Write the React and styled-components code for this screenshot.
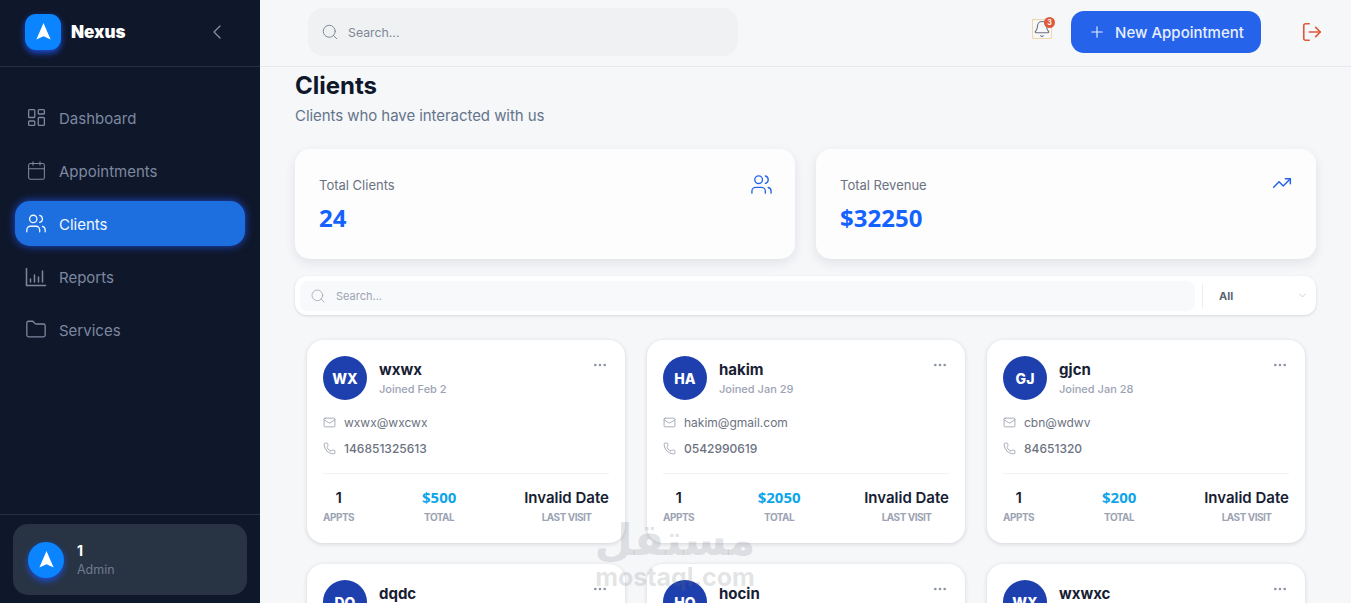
import React from "react";
import styled, { createGlobalStyle } from "styled-components";
import {
  Bell,
  Calendar,
  ChevronDown,
  ChevronLeft,
  Ellipsis,
  Folder,
  LayoutDashboard,
  LogOut,
  Mail,
  Phone,
  Plus,
  Search,
  TrendingUp,
  Users,
} from "lucide-react";

const GlobalStyle = createGlobalStyle`
  html, body {
    margin: 0;
    padding: 0;
    height: 100%;
    overflow: hidden;
    background: #f6f7f9;
    font-family: Inter, "Noto Sans", sans-serif;
  }
  * { box-sizing: border-box; }
`;

const Shell = styled.div`
  display: flex;
  width: 1351px;
  height: 603px;
  overflow: hidden;
  position: relative;
`;

const Sidebar = styled.aside`
  width: 260px;
  flex: none;
  display: flex;
  flex-direction: column;
  background: #0f172a;
`;

const Brand = styled.div`
  height: 67px;
  flex: none;
  display: flex;
  align-items: center;
  padding: 0 31px 3px 25px;
  border-bottom: 1px solid #263040;
`;

const LogoBox = styled.div`
  width: 36px;
  height: 36px;
  display: flex;
  align-items: center;
  justify-content: center;
  flex: none;
  background: #0a84ff;
  border-radius: ${(props) => (props.round ? "50%" : "11px")};
  box-shadow: 0 3px 6px #1d4ed8;
`;

const BrandName = styled.span`
  margin-left: 10px;
  flex: 1;
  color: #fff;
  font-size: 17px;
  font-weight: 900;
`;

const Collapse = styled.span`
  display: flex;
  color: #8b95a7;
`;

const Nav = styled.nav`
  flex: 1;
  display: flex;
  flex-direction: column;
  gap: 8px;
  padding: 28px 15px 0;
`;

const NavItem = styled.div`
  height: 45px;
  display: flex;
  align-items: center;
  gap: 12px;
  padding: 0 10px;
  border-radius: 15px;
  font-size: 15px;
  color: ${(props) => (props.active ? "#f3f7ff" : "#7d88a0")};
  background: ${(props) => (props.active ? "#1d6fe0" : "transparent")};
  box-shadow: ${(props) => (props.active ? "0 0 8px #1d4ed8" : "none")};
`;

const NavIcon = styled.span`
  width: 22px;
  flex: none;
  display: flex;
  align-items: center;
  justify-content: center;
`;

const NavLabel = styled.span`
  padding-top: 2px;
`;

const SideFoot = styled.div`
  flex: none;
  height: 89px;
  padding: 9px 13px 0;
  border-top: 1px solid #263040;
`;

const UserCard = styled.div`
  height: 71px;
  display: flex;
  align-items: center;
  gap: 13px;
  padding: 0 15px;
  background: #283444;
  border-radius: 15px;
`;

const UserName = styled.div`
  color: #fff;
  font-size: 14px;
  font-weight: 700;
  line-height: 19px;
`;

const UserRole = styled.div`
  color: #6f7b90;
  font-size: 12.5px;
  line-height: 19px;
`;

const Main = styled.div`
  flex: 1;
  min-width: 0;
  display: flex;
  flex-direction: column;
`;

const Topbar = styled.header`
  height: 67px;
  flex: none;
  display: flex;
  align-items: center;
  padding: 0 28px 3px 48px;
  border-bottom: 1px solid #e7e9ee;
`;

const TopSearch = styled.div`
  width: 430px;
  height: 48px;
  display: flex;
  align-items: center;
  gap: 9px;
  padding: 0 13px;
  border-radius: 15px;
  background: #f0f1f3;
  color: #7f8796;
  font-size: 12.3px;
`;

const SearchLabel = styled.span`
  padding-top: 1px;
`;

const BellWrap = styled.div`
  position: relative;
  margin-left: auto;
  margin-bottom: 6px;
  width: 20px;
  height: 20px;
  display: flex;
  align-items: center;
  justify-content: center;
  color: #6b7280;
  border: 1px solid #f6d3a8;
`;

const BellBadge = styled.span`
  position: absolute;
  top: -3px;
  right: -4px;
  width: 11px;
  height: 11px;
  border-radius: 50%;
  background: #e0593a;
  color: #fff;
  font-size: 7px;
  font-weight: 700;
  line-height: 11px;
  text-align: center;
`;

const NewButton = styled.button`
  margin-left: 19px;
  width: 190px;
  height: 42px;
  display: flex;
  align-items: center;
  justify-content: center;
  gap: 9px;
  border: 0;
  border-radius: 13px;
  background: #2563eb;
  color: #e8efff;
  font-family: inherit;
  font-size: 15px;
  font-weight: 500;
`;

const ButtonLabel = styled.span`
  padding-top: 2px;
`;

const Exit = styled.span`
  display: flex;
  margin-left: 40px;
  color: #e0593a;
`;

const Content = styled.main`
  flex: 1;
  min-height: 0;
  overflow: hidden;
  padding: 0 35px;
`;

const Title = styled.h1`
  margin: 3px 0 0;
  font-size: 24px;
  line-height: 32px;
  font-weight: 700;
  color: #0f172a;
`;

const Subtitle = styled.p`
  margin: 4px 0 0;
  font-size: 15px;
  line-height: 20px;
  letter-spacing: -0.06px;
  color: #64748b;
`;

const Stats = styled.div`
  display: grid;
  grid-template-columns: 500px 500px;
  gap: 21px;
  margin-top: 23px;
`;

const StatCard = styled.div`
  height: 110px;
  padding: 24px;
  display: flex;
  justify-content: space-between;
  align-items: flex-start;
  background: #fdfdfe;
  border-radius: 15px;
  box-shadow: 0 4px 12px rgba(15, 23, 42, 0.09);
`;

const StatLabel = styled.div`
  font-size: 13px;
  line-height: 24px;
  color: #6b7280;
`;

const StatValue = styled.div`
  margin-top: 5px;
  font-family: "Noto Sans", Inter, sans-serif;
  font-size: 24px;
  line-height: 32px;
  font-weight: 700;
  color: #1463ff;
`;

const StatIcon = styled.span`
  display: flex;
  color: #2563eb;
  margin-right: ${(props) => props.nudge || 0}px;
`;

const FilterBar = styled.div`
  height: 39px;
  width: 1021px;
  margin-top: 17px;
  display: flex;
  align-items: center;
  padding: 0 8px 0 5px;
  background: #fff;
  border-radius: 12px;
  box-shadow: 0 1px 3px rgba(15, 23, 42, 0.14);
`;

const FilterSearch = styled.div`
  flex: 1;
  height: 30px;
  display: flex;
  align-items: center;
  gap: 10px;
  padding: 0 10px;
  border-radius: 8px;
  background: #f8f9fb;
  color: #9ca3b4;
  font-size: 11px;
`;

const FilterSelect = styled.div`
  width: 106px;
  height: 24px;
  margin-left: 7px;
  padding-left: 16px;
  display: flex;
  align-items: center;
  justify-content: space-between;
  border-left: 1px solid #eceef1;
  color: #5b6474;
  font-size: 11px;
  font-weight: 700;
`;

const Grid = styled.div`
  display: grid;
  grid-template-columns: repeat(3, 318px);
  gap: 21px 22px;
  width: 1021px;
  margin-top: 25px;
  padding: 0 11px 0 12px;
`;

const ClientCard = styled.article`
  height: 203px;
  padding: 16px;
  background: #fff;
  border-radius: 16px;
  box-shadow: 0 1px 4px rgba(15, 23, 42, 0.16);
`;

const CardHead = styled.div`
  display: flex;
  align-items: flex-start;
  gap: 12px;
`;

const Avatar = styled.div`
  width: 44px;
  height: 44px;
  flex: none;
  display: flex;
  align-items: center;
  justify-content: center;
  border-radius: 50%;
  background: #1e40af;
  color: #fff;
  font-size: 14px;
  font-weight: 800;
`;

const ClientInfo = styled.div`
  flex: 1;
  padding-top: 4px;
`;

const ClientName = styled.div`
  font-size: 15px;
  line-height: 20px;
  font-weight: 700;
  color: #172033;
`;

const Joined = styled.div`
  font-size: 11px;
  line-height: 18px;
  font-weight: 500;
  color: #9ca3b4;
`;

const More = styled.span`
  display: flex;
  color: #8d95a5;
  margin: 1px 1px 0 0;
`;

const ContactList = styled.div`
  margin-top: 13px;
  display: flex;
  flex-direction: column;
  gap: 8px;
`;

const ContactRow = styled.div`
  height: 18px;
  display: flex;
  align-items: center;
  gap: 8px;
  font-size: 12px;
  color: #6b7280;
  font-weight: ${(props) => (props.strong ? 500 : 400)};
  svg {
    color: #8d95a5;
  }
`;

const CardStats = styled.div`
  margin-top: 16px;
  padding-top: 13px;
  display: flex;
  justify-content: space-between;
  border-top: 1px solid #f2f3f5;
`;

const CardStat = styled.div`
  display: flex;
  flex-direction: column;
  align-items: center;
`;

const CardStatValue = styled.div`
  font-family: ${(props) => (props.accent ? '"Noto Sans", Inter' : 'Inter, "Noto Sans"')}, sans-serif;
  font-size: 15px;
  line-height: 21px;
  font-weight: ${(props) => (props.accent ? 700 : 600)};
  color: ${(props) => (props.accent ? "#0ea5e9" : "#172033")};
`;

const CardStatLabel = styled.div`
  margin-top: 1px;
  font-size: 10px;
  line-height: 16px;
  font-weight: 700;
  letter-spacing: -0.5px;
  color: #9ca3b4;
`;

const Watermark = styled.div`
  position: absolute;
  left: 575px;
  top: 512px;
  width: 200px;
  text-align: center;
  color: rgba(110, 115, 125, 0.2);
  font-weight: 700;
  pointer-events: none;
`;

const WatermarkArabic = styled.div`
  font-family: "Noto Sans", "DejaVu Sans", sans-serif;
  font-size: 44px;
  line-height: 52px;
`;

const WatermarkLatin = styled.div`
  font-size: 25px;
  line-height: 26px;
`;

const LogoMark = ({ size = 23 }) => (
  <svg width={size} height={size} viewBox="0 0 20 20" fill="#fff">
    <path d="M10 2.5 16.2 17 10 14.2 3.8 17z" />
  </svg>
);

const ReportsIcon = () => (
  <svg width="22" height="22" viewBox="0 0 22 22" fill="none" stroke="currentColor" strokeWidth="1.5" strokeLinecap="round">
    <path d="M1.5 2.5v17h19" />
    <path d="M5.5 16v-3M9.5 16V9M13.5 16v-5M17.5 16V5" />
  </svg>
);

const navItems = [
  { label: "Dashboard", icon: <LayoutDashboard size={21} strokeWidth={1.5} /> },
  { label: "Appointments", icon: <Calendar size={21} strokeWidth={1.2} /> },
  { label: "Clients", icon: <Users size={25} strokeWidth={1.4} />, active: true },
  { label: "Reports", icon: <ReportsIcon /> },
  { label: "Services", icon: <Folder size={25} strokeWidth={1.4} /> },
];

const clients = [
  { initials: "WX", name: "wxwx", joined: "Joined Feb 2", email: "wxwx@wxcwx", phone: "146851325613", total: "$500" },
  { initials: "HA", name: "hakim", joined: "Joined Jan 29", email: "hakim@gmail.com", phone: "0542990619", total: "$2050" },
  { initials: "GJ", name: "gjcn", joined: "Joined Jan 28", email: "cbn@wdwv", phone: "84651320", total: "$200" },
  { initials: "DQ", name: "dqdc", joined: "Joined Jan 27", email: "dqdc@gmail.com", phone: "0551234567", total: "$300" },
  { initials: "HO", name: "hocin", joined: "Joined Jan 25", email: "hocin@gmail.com", phone: "0661234567", total: "$800" },
  { initials: "WX", name: "wxwxc", joined: "Joined Jan 24", email: "wxwxc@wx", phone: "13245678", total: "$150" },
];

const App = () => (
  <Shell>
    <GlobalStyle />
    <Sidebar>
      <Brand>
        <LogoBox>
          <LogoMark />
        </LogoBox>
        <BrandName>Nexus</BrandName>
        <Collapse>
          <ChevronLeft size={24} strokeWidth={1.2} />
        </Collapse>
      </Brand>
      <Nav>
        {navItems.map((item) => (
          <NavItem key={item.label} active={item.active}>
            <NavIcon>{item.icon}</NavIcon>
            <NavLabel>{item.label}</NavLabel>
          </NavItem>
        ))}
      </Nav>
      <SideFoot>
        <UserCard>
          <LogoBox round>
            <LogoMark />
          </LogoBox>
          <div>
            <UserName>1</UserName>
            <UserRole>Admin</UserRole>
          </div>
        </UserCard>
      </SideFoot>
    </Sidebar>
    <Main>
      <Topbar>
        <TopSearch>
          <Search size={18} strokeWidth={1.3} />
          <SearchLabel>Search...</SearchLabel>
        </TopSearch>
        <BellWrap>
          <Bell size={20} strokeWidth={1.5} />
          <BellBadge>3</BellBadge>
        </BellWrap>
        <NewButton>
          <Plus size={18} strokeWidth={1.5} />
          <ButtonLabel>New Appointment</ButtonLabel>
        </NewButton>
        <Exit>
          <LogOut size={22} strokeWidth={1.8} />
        </Exit>
      </Topbar>
      <Content>
        <Title>Clients</Title>
        <Subtitle>Clients who have interacted with us</Subtitle>
        <Stats>
          <StatCard>
            <div>
              <StatLabel>Total Clients</StatLabel>
              <StatValue>24</StatValue>
            </div>
            <StatIcon nudge={-2}>
              <Users size={23} strokeWidth={1.4} />
            </StatIcon>
          </StatCard>
          <StatCard>
            <div>
              <StatLabel>Total Revenue</StatLabel>
              <StatValue>$32250</StatValue>
            </div>
            <StatIcon>
              <TrendingUp size={20} strokeWidth={1.8} />
            </StatIcon>
          </StatCard>
        </Stats>
        <FilterBar>
          <FilterSearch>
            <Search size={16} strokeWidth={1.2} />
            Search...
          </FilterSearch>
          <FilterSelect>
            All
            <ChevronDown size={11} strokeWidth={1.3} color="#a8afbc" />
          </FilterSelect>
        </FilterBar>
        <Grid>
          {clients.map((client) => (
            <ClientCard key={client.name}>
              <CardHead>
                <Avatar>{client.initials}</Avatar>
                <ClientInfo>
                  <ClientName>{client.name}</ClientName>
                  <Joined>{client.joined}</Joined>
                </ClientInfo>
                <More>
                  <Ellipsis size={16} strokeWidth={2} />
                </More>
              </CardHead>
              <ContactList>
                <ContactRow>
                  <Mail size={13} strokeWidth={1.4} />
                  {client.email}
                </ContactRow>
                <ContactRow strong>
                  <Phone size={13} strokeWidth={1.4} />
                  {client.phone}
                </ContactRow>
              </ContactList>
              <CardStats>
                <CardStat>
                  <CardStatValue>1</CardStatValue>
                  <CardStatLabel>APPTS</CardStatLabel>
                </CardStat>
                <CardStat>
                  <CardStatValue accent>{client.total}</CardStatValue>
                  <CardStatLabel>TOTAL</CardStatLabel>
                </CardStat>
                <CardStat>
                  <CardStatValue>Invalid Date</CardStatValue>
                  <CardStatLabel>LAST VISIT</CardStatLabel>
                </CardStat>
              </CardStats>
            </ClientCard>
          ))}
        </Grid>
      </Content>
    </Main>
    <Watermark>
      <WatermarkArabic>مستقل</WatermarkArabic>
      <WatermarkLatin>mostaql.com</WatermarkLatin>
    </Watermark>
  </Shell>
);

export default App;
